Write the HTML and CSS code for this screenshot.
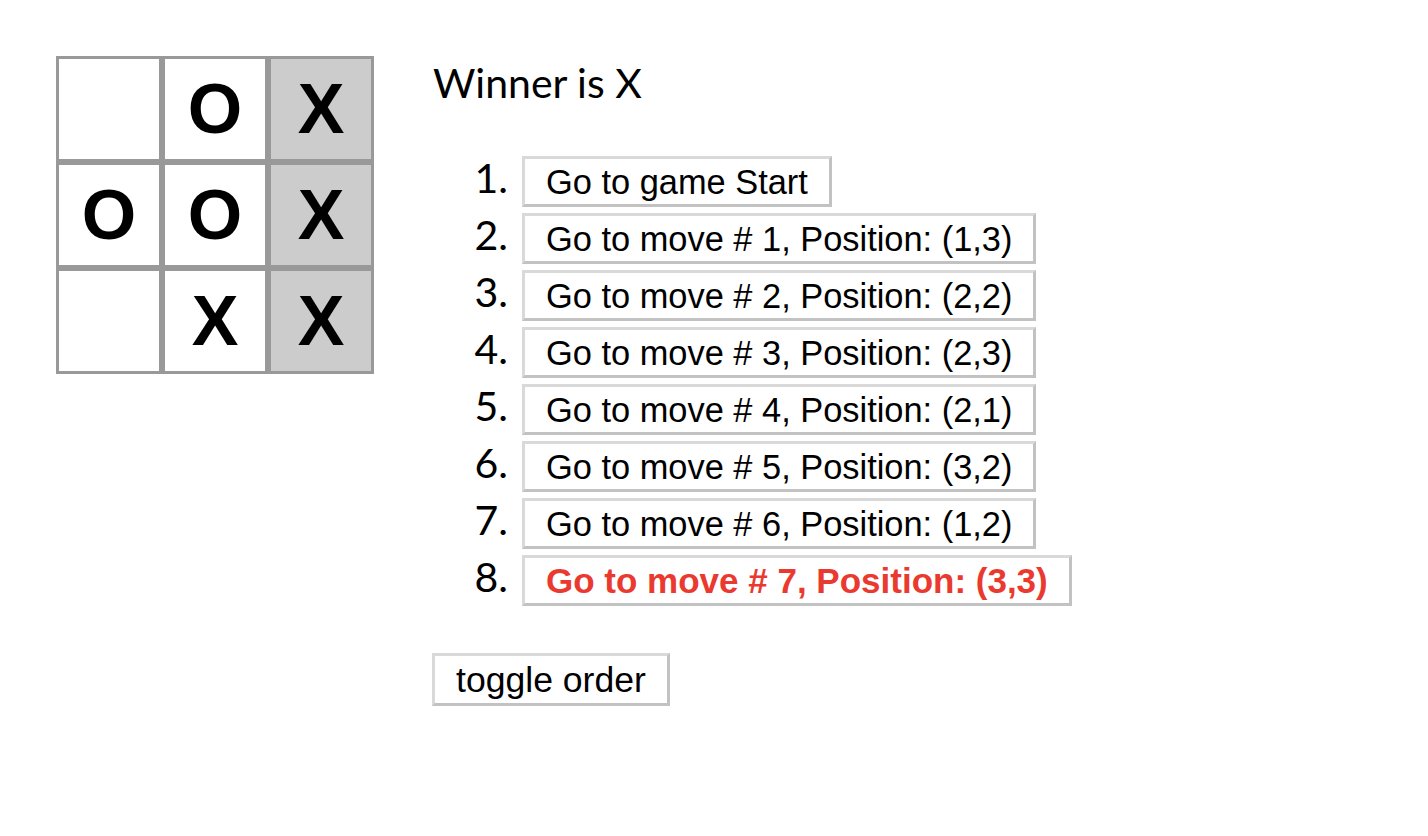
FILE: index.html
```html
<!DOCTYPE html>
<html>
<head>
<meta charset="utf-8">
<title>Tic Tac Toe</title>
<link rel="stylesheet" href="styles.css">
</head>
<body>
<div class="game">
  <div class="board">
    <button class="square"></button>
    <button class="square">O</button>
    <button class="square win">X</button>
    <button class="square">O</button>
    <button class="square">O</button>
    <button class="square win">X</button>
    <button class="square"></button>
    <button class="square">X</button>
    <button class="square win">X</button>
  </div>
  <div class="game-info">
    <div class="status">Winner is X</div>
    <ol class="moves">
      <li><button class="move">Go to game Start</button></li>
      <li><button class="move">Go to move # 1, Position: (1,3)</button></li>
      <li><button class="move">Go to move # 2, Position: (2,2)</button></li>
      <li><button class="move">Go to move # 3, Position: (2,3)</button></li>
      <li><button class="move">Go to move # 4, Position: (2,1)</button></li>
      <li><button class="move">Go to move # 5, Position: (3,2)</button></li>
      <li><button class="move">Go to move # 6, Position: (1,2)</button></li>
      <li><button class="move current">Go to move # 7, Position: (3,3)</button></li>
    </ol>
    <button class="move toggle">toggle order</button>
  </div>
</div>
</body>
</html>
```

FILE: styles.css
```css
html, body {
  margin: 0;
  padding: 0;
  background: #fff;
}

body {
  font-family: "Lato", "Liberation Sans", sans-serif;
  color: #000;
}

.game {
  display: flex;
  align-items: flex-start;
  padding: 56px 0 0 56px;
}

.board {
  display: grid;
  grid-template-columns: repeat(3, 106px);
  grid-template-rows: repeat(3, 106px);
}

.square {
  box-sizing: border-box;
  width: 106px;
  height: 106px;
  margin: 0;
  padding: 0;
  border: 3px solid #999;
  background: #fff;
  font-family: "Liberation Sans", Arial, sans-serif;
  font-weight: bold;
  font-size: 70px;
  line-height: 100px;
  color: #000;
  text-align: center;
}

.square.win {
  background: #ccc;
}

.game-info {
  margin-left: 59px;
}

.status {
  font-family: "Lato", sans-serif;
  font-size: 41px;
  line-height: 53px;
  margin: 0;
}

.moves {
  list-style: none;
  margin: 47px 0 47px 0;
  padding: 0;
  counter-reset: item;
}

.moves li {
  counter-increment: item;
  display: flex;
  align-items: flex-start;
  margin-bottom: 6px;
}

.moves li:last-child {
  margin-bottom: 0;
}

.moves li::before {
  content: counter(item) ".";
  font-family: "Lato", sans-serif;
  font-size: 41px;
  line-height: 43px;
  width: 75px;
  margin-right: 14px;
  text-align: right;
}

.move {
  box-sizing: border-box;
  height: 51px;
  margin: 0;
  padding: 1px 21px 0;
  border: 3px solid;
  border-color: #d9d9d9 #c2c2c2 #c2c2c2 #d9d9d9;
  background: #fff;
  font-family: "Liberation Sans", Arial, sans-serif;
  font-size: 34.4px;
  line-height: 44px;
  color: #000;
  white-space: nowrap;
}

.move.current {
  color: #ea3a30;
  font-weight: bold;
  font-size: 35px;
}

.toggle {
  height: 53px;
  padding: 1px 21px 0;
  font-size: 35.6px;
  margin-left: -1px;
}
```
